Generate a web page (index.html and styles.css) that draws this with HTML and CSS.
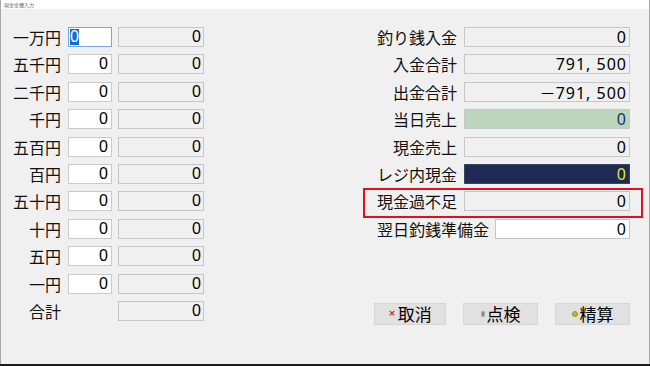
FILE: index.html
```html
<!DOCTYPE html>
<html lang="ja">
<head>
<meta charset="utf-8">
<title>現金金種入力</title>
<link rel="stylesheet" href="styles.css">
</head>
<body>
<div class="window">
  <div class="titlebar">現金金種入力</div>
  <div class="content">
    <div class="left">
      <div class="row"><span class="lbl">一万円</span><span class="inp focus"><span class="sel">0</span></span><span class="disp">0</span></div>
      <div class="row"><span class="lbl">五千円</span><span class="inp">0</span><span class="disp">0</span></div>
      <div class="row"><span class="lbl">二千円</span><span class="inp">0</span><span class="disp">0</span></div>
      <div class="row"><span class="lbl">千円</span><span class="inp">0</span><span class="disp">0</span></div>
      <div class="row"><span class="lbl">五百円</span><span class="inp">0</span><span class="disp">0</span></div>
      <div class="row"><span class="lbl">百円</span><span class="inp">0</span><span class="disp">0</span></div>
      <div class="row"><span class="lbl">五十円</span><span class="inp">0</span><span class="disp">0</span></div>
      <div class="row"><span class="lbl">十円</span><span class="inp">0</span><span class="disp">0</span></div>
      <div class="row"><span class="lbl">五円</span><span class="inp">0</span><span class="disp">0</span></div>
      <div class="row"><span class="lbl">一円</span><span class="inp">0</span><span class="disp">0</span></div>
      <div class="row"><span class="lbl">合計</span><span class="disp total">0</span></div>
    </div>
    <div class="right">
      <div class="rrow"><span class="rlbl">釣り銭入金</span><span class="rbox">0</span></div>
      <div class="rrow"><span class="rlbl">入金合計</span><span class="rbox">791, 500</span></div>
      <div class="rrow"><span class="rlbl">出金合計</span><span class="rbox"><span class="minus">－</span>791, 500</span></div>
      <div class="rrow"><span class="rlbl">当日売上</span><span class="rbox green">0</span></div>
      <div class="rrow"><span class="rlbl">現金売上</span><span class="rbox">0</span></div>
      <div class="rrow"><span class="rlbl">レジ内現金</span><span class="rbox navy">0</span></div>
      <div class="rrow alert"><span class="rlbl">現金過不足</span><span class="rbox">0</span></div>
      <div class="rrow next"><span class="rlbl">翌日釣銭準備金</span><span class="rbox white short">0</span></div>
      <div class="buttons">
        <button class="btn btn-cancel"><span class="ico ico-x">×</span>取消</button>
        <button class="btn btn-check"><span class="ico ico-chk"></span>点検</button>
        <button class="btn btn-calc"><span class="ico ico-dot"></span>精算</button>
      </div>
    </div>
  </div>
</div>
</body>
</html>
```
FILE: styles.css
```css
html, body {
  margin: 0;
  padding: 0;
}
body {
  width: 650px;
  height: 366px;
  overflow: hidden;
  background: #1c1c1c;
  font-family: "Noto Sans CJK JP", "Noto Sans", sans-serif;
}
.window {
  box-sizing: border-box;
  width: 650px;
  height: 364px;
  background: #f0f0f0;
  border-left: 1px solid #a8a8a8;
  border-right: 1px solid #a8a8a8;
}
.titlebar {
  height: 9px;
  background: #ffffff;
  font-size: 5px;
  line-height: 9px;
  color: #6a6a6a;
  padding-left: 3px;
}
.content {
  display: flex;
  padding-top: 14.3px;
}
.left {
  width: 204px;
  display: flex;
  flex-direction: column;
}
.row {
  height: 27.4px;
  display: grid;
  grid-template-columns: 61px 44px 86px;
  column-gap: 6px;
  align-items: center;
}
.lbl {
  text-align: right;
  font-size: 16px;
  line-height: 20px;
  color: #111;
  padding-right: 1px;
}
.inp, .disp {
  box-sizing: border-box;
  height: 20px;
  font-family: "Liberation Sans", "Noto Sans", sans-serif;
  font-size: 16px;
  line-height: 18px;
  text-align: right;
  padding-right: 3px;
  color: #000;
}
.inp {
  background: #ffffff;
  border: 1px solid #cacaca;
}
.inp.focus {
  border-color: #7ba5d6;
  text-align: left;
  padding-left: 1px;
}
.sel {
  background: #0a6fd6;
  color: #ffffff;
  display: inline-block;
  line-height: 16px;
  margin-top: 1px;
}
.disp {
  background: #f0f0f0;
  border: 1px solid #c6c6c6;
  padding-right: 2px;
}
.disp.total {
  grid-column: 3;
}
.right {
  flex: 1;
  padding-right: 19px;
  display: flex;
  flex-direction: column;
}
.rrow {
  height: 27.4px;
  display: flex;
  justify-content: flex-end;
  align-items: center;
  gap: 7px;
  position: relative;
}
.rrow.next {
  gap: 6px;
}
.rlbl {
  font-size: 16px;
  line-height: 20px;
  color: #111;
}
.rbox {
  box-sizing: border-box;
  width: 166px;
  height: 20px;
  background: #f0f0f0;
  border: 1px solid #c6c6c6;
  font-family: "Noto Sans", "Noto Sans CJK JP", sans-serif;
  font-size: 16px;
  line-height: 18px;
  letter-spacing: 1px;
  text-align: right;
  padding-right: 2px;
  color: #000;
}
.minus {
  font-family: "Noto Sans CJK JP", sans-serif;
  letter-spacing: 0;
}
.rbox.green {
  background: #bcd6bc;
  color: #1c2a78;
}
.rbox.navy {
  background: #1d2a52;
  border-color: #3a4468;
  color: #e4e43a;
}
.rbox.white {
  background: #ffffff;
}
.rbox.short {
  width: 135px;
}
.rrow.alert::after {
  content: "";
  position: absolute;
  top: 0;
  right: -13px;
  width: 280px;
  height: 30px;
  box-sizing: border-box;
  border: 2px solid #e0101e;
  pointer-events: none;
}
.buttons {
  margin-top: 60.5px;
  display: flex;
  justify-content: flex-end;
  gap: 17px;
}
.btn {
  box-sizing: border-box;
  height: 22px;
  width: 75px;
  background: #e1e1e1;
  border: 1px solid #d6d6d6;
  border-radius: 0;
  padding: 0;
  margin: 0;
  display: flex;
  align-items: center;
  justify-content: center;
  font-family: "Noto Sans CJK JP", sans-serif;
  font-size: 17px;
  line-height: 20px;
  color: #000;
}
.btn-cancel {
  width: 72px;
}
.ico {
  display: inline-block;
  margin-right: 2px;
}
.ico-x {
  color: #c0282e;
  font-size: 9px;
  font-weight: bold;
  font-family: "DejaVu Sans", sans-serif;
  line-height: 9px;
}
.ico-chk {
  width: 4px;
  height: 6px;
  border-radius: 1px;
  background: #8a8a8a;
  border: 1px solid #b0b0b0;
  box-sizing: border-box;
}
.ico-dot {
  width: 6px;
  height: 6px;
  border-radius: 50%;
  background: #b8b830;
  border: 1px solid #8e9a20;
  box-sizing: border-box;
}
```
